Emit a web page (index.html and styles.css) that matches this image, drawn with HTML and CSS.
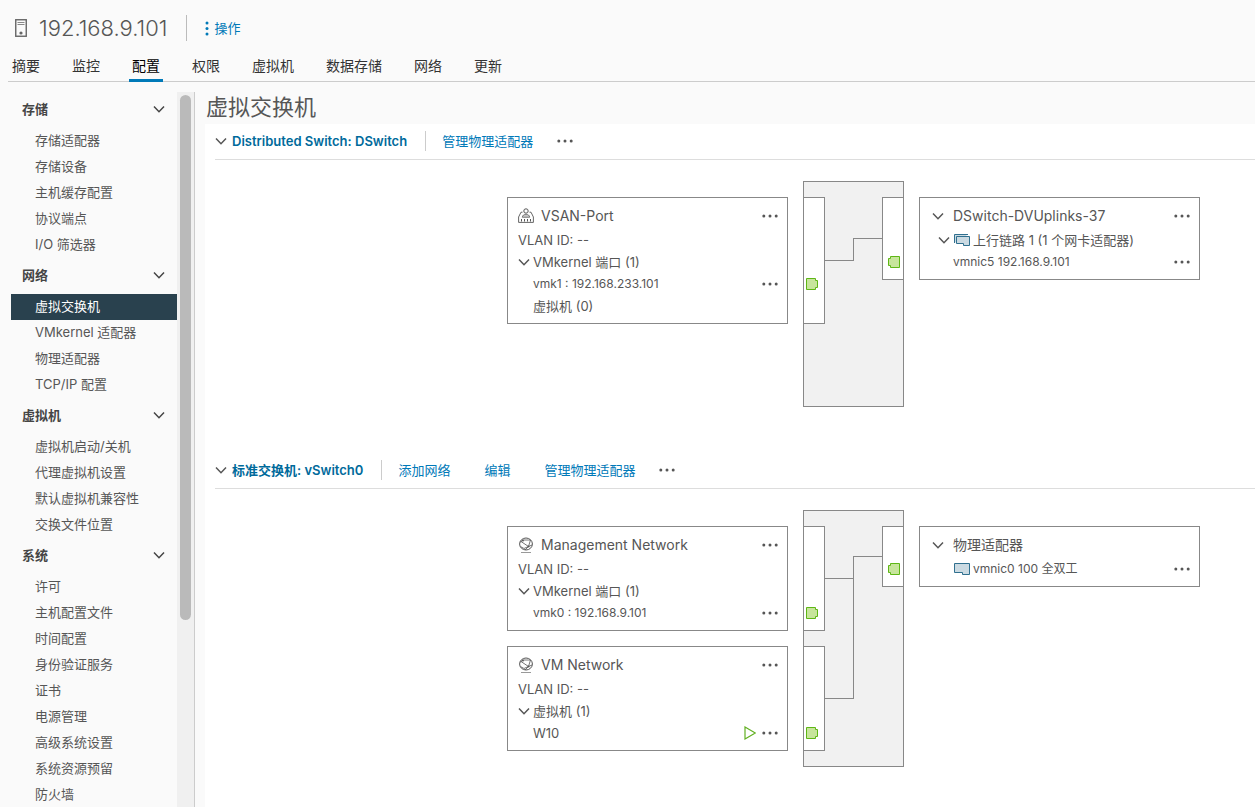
FILE: index.html
```html
<!DOCTYPE html>
<html lang="zh-CN">
<head>
<meta charset="utf-8">
<meta name="viewport" content="width=device-width, initial-scale=1">
<title>192.168.9.101 - 虚拟交换机</title>
<link rel="stylesheet" href="styles.css">
</head>
<body>
<svg class="defs" aria-hidden="true">
  <symbol id="chevron" viewBox="0 0 12 12"><path d="M1 3.5 6 8.7l5-5.2" fill="none" stroke="currentColor" stroke-width="1.5"/></symbol>
  <symbol id="dots" viewBox="0 0 16 16"><circle cx="1.8" cy="8" r="1.5"/><circle cx="8" cy="8" r="1.5"/><circle cx="14.2" cy="8" r="1.5"/></symbol>
  <symbol id="port" viewBox="0 0 12 12"><path d="M.5.5h9v2h2v7h-2v2h-9z" fill="#c7e59c" stroke="#5eb715"/></symbol>
  <symbol id="globe" viewBox="0 0 16 16"><g fill="none" stroke="currentColor"><ellipse cx="8" cy="7" rx="6.400" ry="6"/><path d="M2 5.200 5.500 3h7L10.500 9.500 3 4.500M2.500 9.500 6 11.500 10.500 9.500 14 8M7 13l3.500-3.500" stroke-width=".8"/><path d="M3 15.500h10" stroke="#999"/></g><circle cx="10.500" cy="9.500" r="1"/><circle cx="5" cy="3.500" r=".9"/></symbol>
  <symbol id="portgroup" viewBox="0 0 16 16"><g fill="none" stroke="currentColor"><path d="M4.500 4.200H3L.6 9v5.400h14.800V9L13 4.200h-1.500" stroke-width=".9"/><circle cx="8" cy="3" r="2.200"/><path d="M4.300 9.300c0-4 7.400-4 7.400 0z" fill="currentColor" fill-opacity=".35" stroke-width=".7"/><path d="M3.500 11v2.500M6.500 11v2.500M9.500 11v2.500M12.500 11v2.500" stroke-width="1"/></g></symbol>
  <symbol id="nic" viewBox="0 0 16 12"><path d="M.5.500h15v11h-7v-2h-8z" fill="#cbdae2" stroke="#30708f"/></symbol>
  <symbol id="nics" viewBox="0 0 16 12"><path d="M.5 9V.500H14M2.500 2.500h13v9h-6v-2h-7z" fill="#cbdae2" stroke="#30708f"/></symbol>
</svg>

<header class="top">
  <div class="object">
    <svg class="host" viewBox="0 0 12 18" aria-hidden="true"><rect x=".75" y=".75" width="10.500" height="16.500" fill="none" stroke="#666" stroke-width="1.400"/><path d="M2.500 3.500h7M2.500 5.500h7" stroke="#888"/><circle cx="6" cy="14" r="1.600" fill="#666"/></svg>
    <h1 class="name">192.168.9.101</h1>
    <button class="actions"><svg class="vdots" viewBox="0 0 4 15" aria-hidden="true"><circle cx="2" cy="2" r="1.500"/><circle cx="2" cy="7.500" r="1.500"/><circle cx="2" cy="13" r="1.500"/></svg>操作</button>
  </div>
  <nav class="tabs">
    <a class="tab" href="#">摘要</a>
    <a class="tab" href="#">监控</a>
    <a class="tab active" href="#">配置</a>
    <a class="tab" href="#">权限</a>
    <a class="tab" href="#">虚拟机</a>
    <a class="tab" href="#">数据存储</a>
    <a class="tab" href="#">网络</a>
    <a class="tab" href="#">更新</a>
  </nav>
</header>

<div class="body">
  <aside class="side">
    <nav class="menu">
      <button class="group">存储<svg class="chev"><use href="#chevron"/></svg></button>
      <a class="item" href="#">存储适配器</a>
      <a class="item" href="#">存储设备</a>
      <a class="item" href="#">主机缓存配置</a>
      <a class="item" href="#">协议端点</a>
      <a class="item" href="#">I/O 筛选器</a>
      <button class="group">网络<svg class="chev"><use href="#chevron"/></svg></button>
      <a class="item selected" href="#">虚拟交换机</a>
      <a class="item" href="#">VMkernel 适配器</a>
      <a class="item" href="#">物理适配器</a>
      <a class="item" href="#">TCP/IP 配置</a>
      <button class="group">虚拟机<svg class="chev"><use href="#chevron"/></svg></button>
      <a class="item" href="#">虚拟机启动/关机</a>
      <a class="item" href="#">代理虚拟机设置</a>
      <a class="item" href="#">默认虚拟机兼容性</a>
      <a class="item" href="#">交换文件位置</a>
      <button class="group">系统<svg class="chev"><use href="#chevron"/></svg></button>
      <a class="item" href="#">许可</a>
      <a class="item" href="#">主机配置文件</a>
      <a class="item" href="#">时间配置</a>
      <a class="item" href="#">身份验证服务</a>
      <a class="item" href="#">证书</a>
      <a class="item" href="#">电源管理</a>
      <a class="item" href="#">高级系统设置</a>
      <a class="item" href="#">系统资源预留</a>
      <a class="item" href="#">防火墙</a>
    </nav>
    <div class="track"><div class="thumb"></div></div>
  </aside>

  <main class="main">
    <h2 class="title">虚拟交换机</h2>
    <div class="panel">
      <section class="switch">
        <div class="bar">
          <button class="toggle"><svg class="chev"><use href="#chevron"/></svg>Distributed Switch: DSwitch</button>
          <div class="links">
            <button class="link">管理物理适配器</button>
            <button class="more" aria-label="更多"><svg class="dots"><use href="#dots"/></svg></button>
          </div>
        </div>
        <div class="diagram">
          <div class="cards">
            <article class="card">
              <h3 class="head"><svg class="icon"><use href="#portgroup"/></svg>VSAN-Port<button class="more" aria-label="更多"><svg class="dots"><use href="#dots"/></svg></button></h3>
              <p class="row">VLAN ID: --</p>
              <p class="row"><svg class="chev"><use href="#chevron"/></svg>VMkernel 端口 (1)</p>
              <p class="row sub small">vmk1 : 192.168.233.101<button class="more" aria-label="更多"><svg class="dots"><use href="#dots"/></svg></button></p>
              <p class="row sub">虚拟机 (0)</p>
            </article>
          </div>
          <div class="chassis tall">
            <div class="ports">
              <div class="strip rows4"><svg class="port"><use href="#port"/></svg></div>
            </div>
            <svg class="wires" aria-hidden="true"><path d="M0 63.500h28.500v-22H57"/></svg>
            <div class="ports uplinks">
              <div class="strip rows2"><svg class="port"><use href="#port"/></svg></div>
            </div>
          </div>
          <div class="cards">
            <article class="card uplink">
              <h3 class="head"><svg class="chev"><use href="#chevron"/></svg>DSwitch-DVUplinks-37<button class="more" aria-label="更多"><svg class="dots"><use href="#dots"/></svg></button></h3>
              <p class="row nested"><svg class="chev"><use href="#chevron"/></svg><svg class="nic"><use href="#nics"/></svg>上行链路 1 (1 个网卡适配器)</p>
              <p class="row deep small">vmnic5 192.168.9.101<button class="more" aria-label="更多"><svg class="dots"><use href="#dots"/></svg></button></p>
            </article>
          </div>
        </div>
      </section>

      <section class="switch">
        <div class="bar">
          <button class="toggle"><svg class="chev"><use href="#chevron"/></svg>标准交换机: vSwitch0</button>
          <div class="links">
            <button class="link">添加网络</button>
            <button class="link">编辑</button>
            <button class="link">管理物理适配器</button>
            <button class="more" aria-label="更多"><svg class="dots"><use href="#dots"/></svg></button>
          </div>
        </div>
        <div class="diagram">
          <div class="cards">
            <article class="card">
              <h3 class="head"><svg class="icon"><use href="#globe"/></svg>Management Network<button class="more" aria-label="更多"><svg class="dots"><use href="#dots"/></svg></button></h3>
              <p class="row">VLAN ID: --</p>
              <p class="row"><svg class="chev"><use href="#chevron"/></svg>VMkernel 端口 (1)</p>
              <p class="row sub small">vmk0 : 192.168.9.101<button class="more" aria-label="更多"><svg class="dots"><use href="#dots"/></svg></button></p>
            </article>
            <article class="card">
              <h3 class="head"><svg class="icon"><use href="#globe"/></svg>VM Network<button class="more" aria-label="更多"><svg class="dots"><use href="#dots"/></svg></button></h3>
              <p class="row">VLAN ID: --</p>
              <p class="row"><svg class="chev"><use href="#chevron"/></svg>虚拟机 (1)</p>
              <p class="row sub">W10<svg class="play" viewBox="0 0 12 14" aria-label="已打开电源"><path d="M1 1v12L11.300 7z" fill="none" stroke="#62b022" stroke-width="1.200"/></svg><button class="more" aria-label="更多"><svg class="dots"><use href="#dots"/></svg></button></p>
            </article>
          </div>
          <div class="chassis">
            <div class="ports">
              <div class="strip rows3"><svg class="port"><use href="#port"/></svg></div>
              <div class="strip rows3"><svg class="port"><use href="#port"/></svg></div>
            </div>
            <svg class="wires" aria-hidden="true"><path d="M0 52.500h28.500M0 172.500h28.500V30.500H57"/></svg>
            <div class="ports uplinks">
              <div class="strip rows1"><svg class="port"><use href="#port"/></svg></div>
            </div>
          </div>
          <div class="cards">
            <article class="card uplink">
              <h3 class="head"><svg class="chev"><use href="#chevron"/></svg>物理适配器</h3>
              <p class="row deep small"><svg class="nic"><use href="#nic"/></svg>vmnic0 100 全双工<button class="more" aria-label="更多"><svg class="dots"><use href="#dots"/></svg></button></p>
            </article>
          </div>
        </div>
      </section>
    </div>
  </main>
</div>
</body>
</html>
```
FILE: styles.css
```css
* { box-sizing: border-box; }

body {
  margin: 0;
  height: 100vh;
  display: flex;
  flex-direction: column;
  overflow: hidden;
  background: #fafafa;
  color: #565656;
  font: 13px/22px Inter, "Noto Sans CJK SC", sans-serif;
}

h1, h2, h3, p { margin: 0; font-weight: 400; }

button {
  border: 0;
  padding: 0;
  background: none;
  color: inherit;
  font: inherit;
  cursor: pointer;
}

a { color: inherit; text-decoration: none; }
svg { flex: none; fill: currentColor; }
.defs { position: absolute; width: 0; height: 0; }
.chev { width: 12px; height: 12px; }

/* Header */
.top { flex: none; margin-left: 8px; border-bottom: 1px solid #ccc; }

.object {
  display: flex;
  align-items: center;
  height: 54px;
  padding: 2px 0 0 7px;
}

.host { width: 12px; height: 18px; }

.name {
  padding: 0 18px 0 12px;
  border-right: 1px solid #bbb;
  font-size: 22px;
  font-weight: 300;
  line-height: 26px;
}

.actions {
  display: flex;
  align-items: center;
  gap: 6px;
  padding-left: 18px;
  color: #0079b8;
}

.vdots { width: 4px; height: 15px; }

.tabs { display: flex; gap: 26px; height: 27px; padding-left: 1px; }

.tab {
  padding: 0 3px;
  margin-bottom: -1px;
  font-size: 14px;
  line-height: 24px;
  color: #333;
}

.active { color: #000; border-bottom: 3px solid #0079b8; }

.body { flex: 1; display: flex; min-height: 0; }

/* Sidebar */
.side {
  flex: none;
  display: flex;
  width: 195px;
  margin-top: 10px;
  padding-left: 11px;
  border-right: 1px solid #ccc;
}

.menu { flex: 1; overflow: hidden; }

.group {
  display: flex;
  align-items: center;
  justify-content: space-between;
  width: 100%;
  height: 36px;
  padding: 0 12px 2px 11px;
  color: #454545;
  font-weight: 600;
}

.item { display: block; height: 26px; padding-left: 24px; line-height: 24px; }
.selected { background: #29414e; color: #fff; }

.track { width: 17px; padding: 3px; background: #f0f0f0; }
.thumb { height: 74%; border-radius: 6px; background: #bababa; }

/* Main */
.main { flex: 1; display: flex; flex-direction: column; min-width: 0; padding-left: 10px; }
.title { padding: 9px 0 1px 1px; font-size: 22px; line-height: 32px; }
.panel { flex: 1; background: #fff; padding-left: 10px; }

.bar {
  display: flex;
  align-items: center;
  height: 36px;
  padding-bottom: 2px;
  border-bottom: 1px solid #ddd;
}

.toggle {
  display: flex;
  align-items: center;
  gap: 5px;
  padding-right: 18px;
  color: #006a9b;
  font-weight: 600;
}

.toggle .chev { color: #565656; }

.links {
  display: flex;
  align-items: center;
  gap: 34px;
  height: 20px;
  padding-left: 16px;
  border-left: 1px solid #ccc;
}

.link { color: #0079b8; }
.more { display: flex; margin-left: auto; }
.links .more { margin-left: -10px; }
.dots { width: 16px; height: 16px; }

.diagram {
  display: flex;
  justify-content: flex-end;
  align-items: flex-start;
  gap: 15px;
  padding: 21px 55px 46px 0;
}

.cards { display: flex; flex-direction: column; gap: 15px; width: 281px; padding-top: 16px; }
.card { padding: 5px 9px 6px; border: 1px solid #888; background: #fff; }

.head {
  display: flex;
  align-items: center;
  gap: 7px;
  height: 26px;
  padding-left: 1px;
  font-size: 14px;
}

.icon { width: 16px; height: 16px; }
.row { display: flex; align-items: center; gap: 3px; height: 22px; padding-left: 1px; }
.small { font-size: 12px; }
.sub { padding-left: 16px; }
.play { width: 12px; height: 14px; margin-left: auto; }
.play + .more { margin-left: 3px; }

.uplink .head { gap: 9px; padding-left: 3px; }
.nested { padding-left: 9px; }
.deep { padding-left: 24px; }
.nic { width: 16px; height: 12px; margin-left: 1px; }

/* Switch body with its port strips */
.chassis {
  display: grid;
  grid-template-columns: 21px 57px 21px;
  width: 101px;
  padding: 15px 0;
  border: 1px solid #888;
  background: #f1f1f1;
}

.tall { padding-bottom: 82px; }
.ports { display: flex; flex-direction: column; gap: 15px; }

.strip {
  display: flex;
  align-items: flex-end;
  border: 1px solid #888;
  border-left: 0;
  background: #fff;
  padding: 0 0 11px 2px;
}

.rows1 { height: 61px; }
.rows2 { height: 83px; }
.rows3 { height: 105px; }
.rows4 { height: 127px; padding-bottom: 33px; }
.uplinks .strip { border-left: 1px solid #888; border-right: 0; padding-left: 5px; }
.port { width: 12px; height: 12px; }
.uplinks .port { transform: scaleX(-1); }

.wires { width: 57px; height: 1px; overflow: visible; }
.wires path { fill: none; stroke: #888; shape-rendering: crispEdges; }
```
